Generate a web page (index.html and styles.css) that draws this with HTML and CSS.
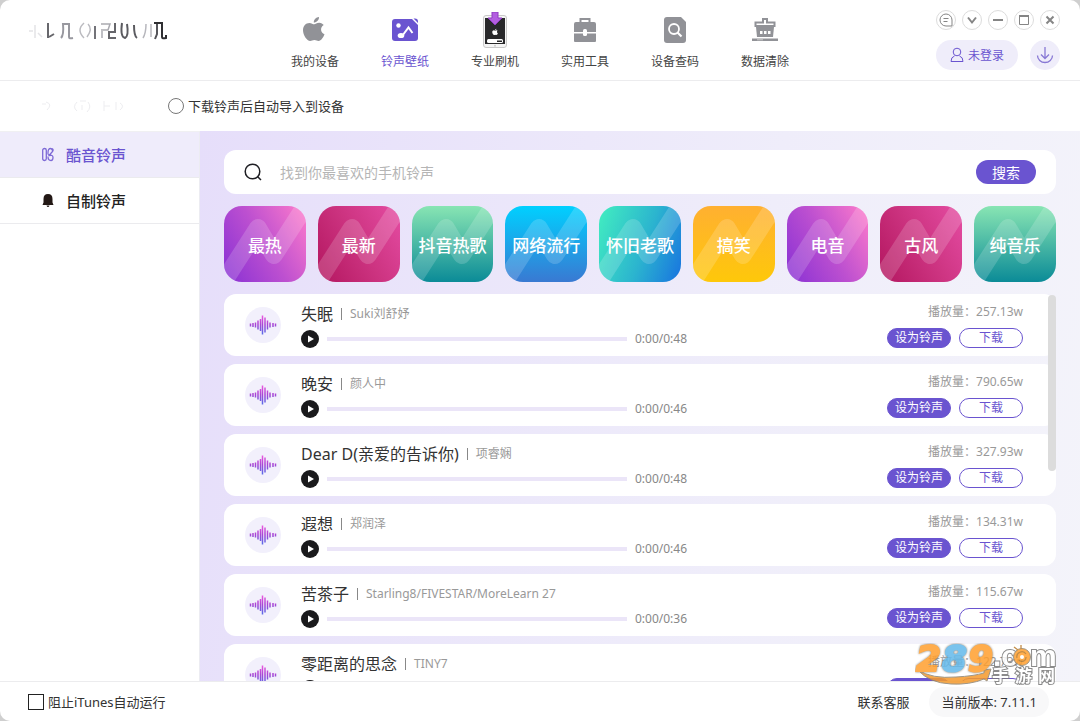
FILE: index.html
```
<!DOCTYPE html>
<html lang="zh-CN">
<head>
    <meta charset="UTF-8">
    <meta name="viewport" content="width=device-width, initial-scale=1.0">
    <title>铃声壁纸</title>
    <link rel="stylesheet" href="styles.css">
</head>
<body>
    <!-- shared icons -->
    <svg class="defs" width="0" height="0" aria-hidden="true">
        <defs>
            <linearGradient id="waveFill" gradientUnits="userSpaceOnUse" x1="0" y1="4" x2="0" y2="23">
                <stop offset="0" stop-color="#f05ae0"/>
                <stop offset="0.5" stop-color="#a846d4"/>
                <stop offset="1" stop-color="#5a6be8"/>
            </linearGradient>
            <path id="apple" d="M12.2 6.3c1.200 0 2.600-1.500 5-1.500 2 0 3.600 1 4.500 2.300-3.900 2.300-3.300 7.700.8 9.200-1.200 3.300-3.500 6.700-5.900 6.700-1.600 0-2.200-1-4.200-1s-2.700 1-4.200 1C4.900 23 1 17.200 1 12.300c0-4.700 3-7.400 6.300-7.400 2.200 0 3.700 1.400 4.900 1.400zM11.800 4.500C11.700 1.800 14.200-.8 17-1c.3 2.900-2.300 5.500-5.200 5.500z"/>
        </defs>
        <symbol id="wave" viewBox="0 0 28 28">
            <path d="M1.500 12.500v3M4 12v4M6.500 11.500v5M9 9.500v9M11.500 8v12M13.500 4.500v19M16 6.500v15M18.500 9.500v9M21 11.500v5M24 12v4M26.500 12.500v3" fill="none" stroke="url(#waveFill)" stroke-width="1.500"/>
        </symbol>
        <symbol id="play" viewBox="0 0 18 18">
            <circle cx="9" cy="9" r="9" fill="#1a1a1c"/>
            <path d="M7 5.500v7l6-3.500z" fill="#fff"/>
        </symbol>
        <symbol id="zigzag" viewBox="0 0 82 76" preserveAspectRatio="none">
            <path d="M-9 89L34 22L50 49L88 -10" fill="none" stroke="#fff" stroke-opacity="0.17" stroke-width="18" stroke-linejoin="round"/>
        </symbol>
    </svg>

    <div class="app">
        <header class="header">
            <div class="brand">
                <svg width="140" height="24" viewBox="0 0 140 24" fill="none" stroke-width="1.500" aria-hidden="true">
                    <path d="M1 11h4M7 5v13M10 13l4 4" stroke="#e3e3e6"/>
                    <path d="M20 3v15M21 17l5-3" stroke="#67676c" stroke-width="2"/>
                    <path d="M33 18q3-3 2-14h6v13q0 2 4 1" stroke="#98989f" stroke-width="2"/>
                    <path d="M56 3q-8 7 0 15M60 4q5 5-1 13" stroke="#bbbbc0"/>
                    <path d="M67 6v13" stroke="#737379" stroke-width="2"/>
                    <path d="M73 4h9l-2 6h-5M74 9v9" stroke="#aaaab0"/>
                    <path d="M87 3v9h-6v6h7" stroke="#66666b" stroke-width="2"/>
                    <path d="M94 3q-2 14 3 15 4-2 2-14M106 5q0 11 3 13" stroke="#5b5b60" stroke-width="2"/>
                    <path d="M115 18q3-5 3-14M123 4v13" stroke="#b7b7bd"/>
                    <path d="M126 3h9" stroke="#2f2f32" stroke-width="2"/>
                    <path d="M129 4v10l-2 5" stroke="#55555a" stroke-width="2"/>
                    <path d="M134 3v14q0 2 4 1v-3" stroke="#2f2f32" stroke-width="2"/>
                </svg>
            </div>
            <nav class="nav">
                <a class="nav-item" href="#">
                    <svg width="26" height="30" viewBox="0 -3 26 30" fill="#919297" aria-hidden="true"><use href="#apple"/></svg>
                    <span>我的设备</span>
                </a>
                <a class="nav-item active" href="#">
                    <svg width="26" height="30" viewBox="0 0 26 30" aria-hidden="true">
                        <path d="M3 4h17l6 6v13q0 3-3 3H3q-3 0-3-3V7q0-3 3-3z" fill="#6a54d0"/>
                        <path d="M21.500 3.500H23q3 0 3 3v1.500z" fill="#6a54d0"/>
                        <circle cx="6.500" cy="10.500" r="2.200" fill="#fff"/>
                        <ellipse cx="9" cy="20.500" rx="3.300" ry="2.600" fill="#fff"/>
                        <path d="M10.500 20.500l6-8 4 5.500" fill="none" stroke="#fff" stroke-width="2"/>
                    </svg>
                    <span>铃声壁纸</span>
                </a>
                <a class="nav-item" href="#">
                    <svg width="26" height="36" viewBox="0 0 26 36" aria-hidden="true">
                        <rect x="1.500" y="3.500" width="23" height="32" rx="2.500" fill="#f4f4f4" stroke="#c9c9c9"/>
                        <rect x="3" y="6" width="20" height="26" fill="#28282a"/>
                        <circle cx="13" cy="33.800" r="1" fill="#ccc"/>
                        <use href="#apple" transform="translate(10 17) scale(.26)" fill="#fff"/>
                        <rect x="5" y="27" width="16" height="4" rx="1.500" fill="#fff"/>
                        <rect x="15" y="28.500" width="5" height="1.500" fill="#28282a"/>
                        <path d="M10 0h6v6h4l-7 7-7-7h4z" fill="#b35ee0" stroke="#8e3cc0"/>
                    </svg>
                    <span>专业刷机</span>
                </a>
                <a class="nav-item" href="#">
                    <svg width="26" height="30" viewBox="0 0 26 30" aria-hidden="true">
                        <path d="M8.500 8V4h9v4" fill="none" stroke="#919297" stroke-width="2"/>
                        <path d="M4 7h18q2 0 2 2v8H2V9q0-2 2-2zM2 18.500h22V26q0 1-1 1H3q-1 0-1-1z" fill="#919297"/>
                        <rect x="11" y="14" width="4" height="7" rx="1.500" fill="#fff"/>
                    </svg>
                    <span>实用工具</span>
                </a>
                <a class="nav-item" href="#">
                    <svg width="26" height="30" viewBox="0 0 26 30" aria-hidden="true">
                        <path d="M5 2h14l5 5v18q0 3-3 3H5q-3 0-3-3V5q0-3 3-3z" fill="#919297"/>
                        <circle cx="12" cy="14" r="5" fill="none" stroke="#fff" stroke-width="1.800"/>
                        <path d="M15.500 17.500l4 4" stroke="#fff" stroke-width="2.200"/>
                    </svg>
                    <span>设备查码</span>
                </a>
                <a class="nav-item" href="#">
                    <svg width="28" height="30" viewBox="0 0 28 30" aria-hidden="true">
                        <path d="M4.500 11V7.500h7.500V4h4v3.500h7.500V11z" fill="none" stroke="#919297" stroke-width="2"/>
                        <path d="M5 12h18l-1 10H6z" fill="#919297"/>
                        <path d="M9 16h2.500v3H9zM13 16h2.500v3H13zM17 16h2.500v3H17z" fill="#fff"/>
                        <rect x="1" y="23.500" width="26" height="2.500" fill="#919297"/>
                        <path d="M6 24.800h6" stroke="#ccc"/>
                    </svg>
                    <span>数据清除</span>
                </a>
            </nav>
            <div class="tools">
                <div class="window-buttons">
                    <button class="win" type="button" aria-label="反馈"><svg width="14" height="14" viewBox="0 0 14 14"><path d="M13 7v6H7a6 6 0 1 1 6-6zM4.500 5.500h5M4.500 8.500h4"/></svg></button>
                    <button class="win" type="button" aria-label="菜单"><svg width="14" height="14" viewBox="0 0 14 14"><path class="bold" d="M3 4.500l4 5 4-5"/></svg></button>
                    <button class="win" type="button" aria-label="最小化"><svg width="14" height="14" viewBox="0 0 14 14"><path class="bold" d="M2 7h10"/></svg></button>
                    <button class="win" type="button" aria-label="最大化"><svg width="14" height="14" viewBox="0 0 14 14"><path d="M2.500 3v8.500h9V3z"/><path class="bold" d="M2 3h10"/></svg></button>
                    <button class="win" type="button" aria-label="关闭"><svg width="14" height="14" viewBox="0 0 14 14"><path class="bold" d="M3.500 3.500l7 7M10.500 3.500l-7 7"/></svg></button>
                </div>
                <div class="account">
                    <button class="login" type="button">
                        <svg width="14" height="16" viewBox="0 0 14 16" fill="none" stroke="#6a54d0" aria-hidden="true"><circle cx="7" cy="5" r="3.800"/><path d="M4.500 9Q1 10 1 14.500h12Q13 10 9.500 9"/></svg>
                        未登录
                    </button>
                    <button class="download-center" type="button" aria-label="下载中心">
                        <svg width="18" height="18" viewBox="0 0 18 18" fill="none" stroke="#8878d4" stroke-width="1.300"><path d="M9 1v11M5 8.500l4 4 4-4M1.500 9.500a7.500 7 0 0 0 15 0"/></svg>
                    </button>
                </div>
            </div>
        </header>

        <div class="options">
            <svg class="smudge" width="90" height="16" viewBox="0 0 90 16" fill="none" stroke="#ededf0" aria-hidden="true">
                <path d="M2 6h4M6 4q7 2 1 8M37 4q-5 5 0 9M40 3h6M48 4q4 5-1 10M42 7v5M64 3v10M64 8h6M76 4v8M80 5q5 3 0 7"/>
            </svg>
            <label class="choice"><input class="radio" type="radio" name="autoImport">下载铃声后自动导入到设备</label>
        </div>

        <div class="body">
            <aside class="sidebar">
                <a class="side-item active" href="#">
                    <svg width="16" height="16" viewBox="0 0 16 16" fill="none" stroke="#7e6ad6" stroke-width="1.300" aria-hidden="true">
                        <rect x="2.700" y="1.500" width="3.600" height="12" rx="1.800"/>
                        <path d="M12 1.500q2 1 .5 3L9 8.500q-1.500-1-1-3 0-4 2.500-4 1.500 0 2 2M9 8.500q4-1 4 2 0 3-2 3-3 0-3-4"/>
                    </svg>
                    酷音铃声
                </a>
                <a class="side-item" href="#">
                    <svg width="16" height="16" viewBox="0 0 16 16" fill="#231815" aria-hidden="true">
                        <path d="M8 1q4.500 0 4.500 5v3.500L13.500 12h-11l1-2.500V6Q3.500 1 8 1zM6.500 12.500h3Q9 14 8 14t-1.500-1.500z"/>
                    </svg>
                    自制铃声
                </a>
            </aside>

            <main class="content">
                <form class="search">
                    <svg width="18" height="18" viewBox="0 0 18 18" fill="none" stroke="#1f1f24" stroke-width="1.500" aria-hidden="true"><circle cx="8.500" cy="8.500" r="7.300"/><path d="M13.500 13.500l3.500 3.500"/></svg>
                    <input class="search-input" type="text" aria-label="搜索铃声" placeholder="找到你最喜欢的手机铃声">
                    <button class="search-button" type="button">搜索</button>
                </form>

                <div class="categories">
                    <button class="category violet" type="button"><svg aria-hidden="true"><use href="#zigzag"/></svg><span>最热</span></button>
                    <button class="category rose" type="button"><svg aria-hidden="true"><use href="#zigzag"/></svg><span>最新</span></button>
                    <button class="category green" type="button"><svg aria-hidden="true"><use href="#zigzag"/></svg><span>抖音热歌</span></button>
                    <button class="category blue" type="button"><svg aria-hidden="true"><use href="#zigzag"/></svg><span>网络流行</span></button>
                    <button class="category aqua" type="button"><svg aria-hidden="true"><use href="#zigzag"/></svg><span>怀旧老歌</span></button>
                    <button class="category amber" type="button"><svg aria-hidden="true"><use href="#zigzag"/></svg><span>搞笑</span></button>
                    <button class="category violet" type="button"><svg aria-hidden="true"><use href="#zigzag"/></svg><span>电音</span></button>
                    <button class="category rose" type="button"><svg aria-hidden="true"><use href="#zigzag"/></svg><span>古风</span></button>
                    <button class="category green" type="button"><svg aria-hidden="true"><use href="#zigzag"/></svg><span>纯音乐</span></button>
                </div>

                <div class="song-list">
                    <article class="song">
                        <div class="cover"><svg width="28" height="28" aria-hidden="true"><use href="#wave"/></svg></div>
                        <div class="info">
                            <div class="title"><span class="name">失眠</span><span class="singer">Suki刘舒妤</span></div>
                            <div class="player">
                                <button class="play" type="button" aria-label="播放"><svg width="18" height="18"><use href="#play"/></svg></button>
                                <input class="progress" type="range" value="0" aria-label="播放进度">
                                <span>0:00/0:48</span>
                            </div>
                        </div>
                        <div class="actions">
                            <div class="count">播放量：257.13w</div>
                            <div class="buttons"><button class="set" type="button">设为铃声</button><button class="get" type="button">下载</button></div>
                        </div>
                    </article>
                    <article class="song">
                        <div class="cover"><svg width="28" height="28" aria-hidden="true"><use href="#wave"/></svg></div>
                        <div class="info">
                            <div class="title"><span class="name">晚安</span><span class="singer">颜人中</span></div>
                            <div class="player">
                                <button class="play" type="button" aria-label="播放"><svg width="18" height="18"><use href="#play"/></svg></button>
                                <input class="progress" type="range" value="0" aria-label="播放进度">
                                <span>0:00/0:46</span>
                            </div>
                        </div>
                        <div class="actions">
                            <div class="count">播放量：790.65w</div>
                            <div class="buttons"><button class="set" type="button">设为铃声</button><button class="get" type="button">下载</button></div>
                        </div>
                    </article>
                    <article class="song">
                        <div class="cover"><svg width="28" height="28" aria-hidden="true"><use href="#wave"/></svg></div>
                        <div class="info">
                            <div class="title"><span class="name">Dear D(亲爱的告诉你)</span><span class="singer">项睿娴</span></div>
                            <div class="player">
                                <button class="play" type="button" aria-label="播放"><svg width="18" height="18"><use href="#play"/></svg></button>
                                <input class="progress" type="range" value="0" aria-label="播放进度">
                                <span>0:00/0:48</span>
                            </div>
                        </div>
                        <div class="actions">
                            <div class="count">播放量：327.93w</div>
                            <div class="buttons"><button class="set" type="button">设为铃声</button><button class="get" type="button">下载</button></div>
                        </div>
                    </article>
                    <article class="song">
                        <div class="cover"><svg width="28" height="28" aria-hidden="true"><use href="#wave"/></svg></div>
                        <div class="info">
                            <div class="title"><span class="name">遐想</span><span class="singer">郑润泽</span></div>
                            <div class="player">
                                <button class="play" type="button" aria-label="播放"><svg width="18" height="18"><use href="#play"/></svg></button>
                                <input class="progress" type="range" value="0" aria-label="播放进度">
                                <span>0:00/0:46</span>
                            </div>
                        </div>
                        <div class="actions">
                            <div class="count">播放量：134.31w</div>
                            <div class="buttons"><button class="set" type="button">设为铃声</button><button class="get" type="button">下载</button></div>
                        </div>
                    </article>
                    <article class="song">
                        <div class="cover"><svg width="28" height="28" aria-hidden="true"><use href="#wave"/></svg></div>
                        <div class="info">
                            <div class="title"><span class="name">苦茶子</span><span class="singer">Starling8/FIVESTAR/MoreLearn 27</span></div>
                            <div class="player">
                                <button class="play" type="button" aria-label="播放"><svg width="18" height="18"><use href="#play"/></svg></button>
                                <input class="progress" type="range" value="0" aria-label="播放进度">
                                <span>0:00/0:36</span>
                            </div>
                        </div>
                        <div class="actions">
                            <div class="count">播放量：115.67w</div>
                            <div class="buttons"><button class="set" type="button">设为铃声</button><button class="get" type="button">下载</button></div>
                        </div>
                    </article>
                    <article class="song">
                        <div class="cover"><svg width="28" height="28" aria-hidden="true"><use href="#wave"/></svg></div>
                        <div class="info">
                            <div class="title"><span class="name">零距离的思念</span><span class="singer">TINY7</span></div>
                            <div class="player">
                                <button class="play" type="button" aria-label="播放"><svg width="18" height="18"><use href="#play"/></svg></button>
                                <input class="progress" type="range" value="0" aria-label="播放进度">
                            </div>
                        </div>
                        <div class="actions">
                            <div class="count">播放量：122.73w</div>
                            <div class="buttons"><button class="set" type="button">设为铃声</button><button class="get" type="button">下载</button></div>
                        </div>
                    </article>
                    <div class="scroll-thumb"></div>
                </div>
            </main>
        </div>

        <footer class="footer">
            <label class="choice"><input class="checkbox" type="checkbox">阻止iTunes自动运行</label>
            <a class="support" href="#">联系客服</a>
            <span class="version">当前版本: 7.11.1</span>
        </footer>

        <svg class="site-mark" width="142" height="42" viewBox="0 0 142 42" aria-label="289.com手游网">
            <path d="M3 27q14 9 38 7 18-1 28-4v-3l7-1-4 12-3-2q-14 6-33 5Q14 40 3 27z" fill="#f59a2c" stroke="#8d8371"/>
            <g class="mark-digits">
                <text x="1" y="28" fill="#ff9f2e" stroke="#ff9f2e">2</text>
                <text x="27" y="28" fill="#63b9ea" stroke="#63b9ea">8</text>
                <text x="53" y="28" fill="#ff9f2e" stroke="#ff9f2e">9</text>
            </g>
            <g class="mark-com">
                <text x="78" y="23">.c</text>
                <text x="115" y="23">m</text>
            </g>
            <circle cx="107" cy="14" r="8.500" fill="#ff9f2e" stroke="#8d8371"/>
            <path d="M102 15a5 5 0 0 1 9-4M104 17a4 4 0 0 0 7-3M99 4l4 3M106 2v4" fill="none" stroke="#b87928" stroke-width="1.300"/>
            <circle cx="107" cy="14" r="2" fill="#fff"/>
            <g class="mark-cjk">
                <text x="77" y="39">手</text>
                <text x="100" y="39">游</text>
                <text x="123" y="39">网</text>
            </g>
        </svg>
    </div>
</body>
</html>
```
FILE: styles.css
```
* {
    box-sizing: border-box;
}

body {
    margin: 0;
    background-color: #cfcfcf;
    color: #333;
    font-family: "Noto Sans", "Noto Sans CJK SC", sans-serif;
    font-size: 13px;
    line-height: 20px;
}

a {
    color: inherit;
    text-decoration: none;
}

button {
    padding: 0;
    border: none;
    font-family: inherit;
    cursor: pointer;
}

svg {
    display: block;
    flex-shrink: 0;
}

.defs {
    position: absolute;
}

.app {
    position: relative;
    display: flex;
    flex-direction: column;
    height: 100vh;
    border-radius: 10px;
    background-color: #fff;
    overflow: hidden;
}

/* header */
.header {
    display: flex;
    padding-right: 20px;
    border-bottom: 1px solid #ececee;
}

.brand {
    width: 270px;
    padding: 20px 0 0 28px;
}

.nav {
    display: flex;
}

.nav-item {
    display: flex;
    flex-direction: column;
    align-items: center;
    justify-content: flex-end;
    gap: 4px;
    width: 90px;
    height: 80px;
    padding-bottom: 8px;
    font-size: 12px;
    color: #444;
}

.nav-item svg {
    height: 36px;
}

.nav-item.active {
    color: #6a54d0;
}

.tools {
    display: flex;
    flex-direction: column;
    gap: 10px;
    margin-left: auto;
    padding-top: 10px;
}

.window-buttons {
    display: flex;
    gap: 6px;
}

.win {
    display: flex;
    align-items: center;
    justify-content: center;
    width: 20px;
    height: 20px;
    border: 1px solid #dcdcdc;
    border-radius: 50%;
    background-color: #fff;
}

.win path {
    fill: none;
    stroke: #858585;
}

.win .bold {
    stroke-width: 2;
}

.account {
    display: flex;
    gap: 12px;
}

.login,
.download-center {
    display: flex;
    align-items: center;
    justify-content: center;
    gap: 4px;
    height: 30px;
    border-radius: 15px;
    background-color: #efedfa;
    color: #6a54d0;
    font-size: 12px;
}

.login {
    flex: 1;
}

.download-center {
    width: 30px;
}

.options {
    display: flex;
    align-items: center;
    gap: 38px;
    height: 50px;
    padding-left: 40px;
}

.choice {
    display: flex;
    align-items: center;
    gap: 4px;
}

.radio,
.checkbox {
    appearance: none;
    width: 16px;
    height: 16px;
    margin: 0;
    border: 1px solid #777;
    background-color: #fff;
}

.radio {
    border-radius: 50%;
}

.checkbox {
    border-color: #222;
}

/* body */
.body {
    display: flex;
    flex: 1;
    min-height: 0;
}

.sidebar {
    width: 200px;
    border-top: 1px solid #f0f0f2;
    border-right: 1px solid #ececf2;
}

.side-item {
    display: flex;
    align-items: center;
    gap: 10px;
    height: 46px;
    padding-left: 40px;
    border-bottom: 1px solid #ebebee;
    font-size: 15px;
    font-weight: 500;
    color: #222;
}

.side-item.active {
    background-color: #efecfb;
    color: #6a54d0;
}

.content {
    display: flex;
    flex: 1;
    flex-direction: column;
    gap: 12px;
    min-width: 0;
    padding: 19px 24px 0;
    background-image: linear-gradient(100deg, #e6defa, #efedfa 60%, #f4f4fa);
}

.search {
    display: flex;
    flex-shrink: 0;
    align-items: center;
    height: 44px;
    padding: 0 20px;
    border-radius: 12px;
    background-color: #fff;
}

.search-input {
    flex: 1;
    min-width: 0;
    padding: 0 18px;
    border: none;
    outline: none;
    font-family: inherit;
    font-size: 14px;
}

.search-input::placeholder {
    color: #b5b5b5;
}

.search-button {
    width: 60px;
    height: 24px;
    border-radius: 12px;
    background-color: #6a54d0;
    color: #fff;
    font-size: 14px;
}

.categories {
    display: grid;
    grid-template-columns: repeat(9, 1fr);
    gap: 12px;
}

.category {
    position: relative;
    height: 76px;
    border-radius: 18px;
    color: #fff;
    font-size: 17px;
    font-weight: 500;
    white-space: nowrap;
    overflow: hidden;
}

.category svg {
    position: absolute;
    inset: 0;
    width: 100%;
    height: 100%;
}

.category span {
    position: relative;
}

.violet {
    background-image: linear-gradient(60deg, #8730d4, #bd50d0 50%, #ff7ccb);
}

.rose {
    background-image: linear-gradient(60deg, #b3165f, #cc3380 50%, #e54ca3);
}

.green {
    background-image: linear-gradient(#88e5b3, #0b8b97);
}

.blue {
    background-image: linear-gradient(#00d0ff, #3979d2);
}

.aqua {
    background-image: linear-gradient(110deg, #42eec0, #2bb4cf 55%, #1873e0);
}

.amber {
    background-image: linear-gradient(#ffb031, #fec80a);
}

/* songs */
.song-list {
    position: relative;
    display: flex;
    flex: 1;
    flex-direction: column;
    gap: 8px;
    min-height: 0;
    overflow: hidden;
}

.song {
    display: flex;
    flex-shrink: 0;
    align-items: center;
    gap: 20px;
    height: 62px;
    padding: 0 33px 0 21px;
    border-radius: 12px;
    background-color: #fff;
}

.cover {
    display: flex;
    align-items: center;
    justify-content: center;
    width: 36px;
    height: 36px;
    border-radius: 50%;
    background-color: #f2f0fc;
}

.info {
    display: flex;
    flex: 1;
    flex-direction: column;
    gap: 4px;
}

.title {
    display: flex;
    align-items: center;
    height: 24px;
}

.name {
    font-size: 16px;
    line-height: 24px;
    color: #333;
}

.singer {
    margin-left: 8px;
    padding-left: 8px;
    border-left: 1px solid #888;
    font-size: 12px;
    line-height: 12px;
    color: #999;
}

.player {
    display: flex;
    align-items: center;
    gap: 8px;
    height: 18px;
    font-size: 12px;
    color: #888;
}

.play {
    border-radius: 50%;
    background: none;
}

.progress {
    appearance: none;
    width: 53%;
    height: 4px;
    margin: 0;
    background-color: #ebe5f8;
}

.progress::-webkit-slider-thumb {
    appearance: none;
    width: 0;
    height: 0;
}

.actions {
    display: flex;
    flex-direction: column;
    gap: 6px;
    text-align: right;
}

.count {
    font-size: 12px;
    color: #999;
}

.buttons {
    display: flex;
    gap: 8px;
}

.set,
.get {
    width: 64px;
    height: 20px;
    border: 1px solid #6a54d0;
    border-radius: 10px;
    font-size: 12px;
    line-height: 18px;
}

.set {
    background-color: #6a54d0;
    color: #fff;
}

.get {
    background-color: #fff;
    color: #6a54d0;
}

.scroll-thumb {
    position: absolute;
    top: 1px;
    right: 0;
    width: 8px;
    height: 176px;
    border-radius: 4px;
    background-color: #dcdcdc;
}

/* footer */
.footer {
    display: flex;
    align-items: center;
    gap: 20px;
    height: 40px;
    padding: 0 31px 0 28px;
    border-top: 1px solid #ececee;
}

.support {
    margin-left: auto;
}

.version {
    padding: 5px 12px;
    border-radius: 15px;
    background-color: #f8f8f9;
}

.site-mark {
    position: absolute;
    right: 23px;
    bottom: 36px;
    opacity: 0.85;
    pointer-events: none;
}

.mark-digits {
    font: italic bold 36px "DejaVu Sans", sans-serif;
    stroke-width: 2px;
    filter: drop-shadow(0 0 1px #6b6252);
}

.mark-com {
    font: bold 30px "Liberation Sans", sans-serif;
    fill: #fff;
    stroke: #777;
    stroke-width: 2px;
    paint-order: stroke;
}

.mark-cjk {
    font: bold 17px "Noto Sans CJK SC", sans-serif;
    fill: #fff;
    stroke: #777;
    stroke-width: 2px;
    paint-order: stroke;
}
```
